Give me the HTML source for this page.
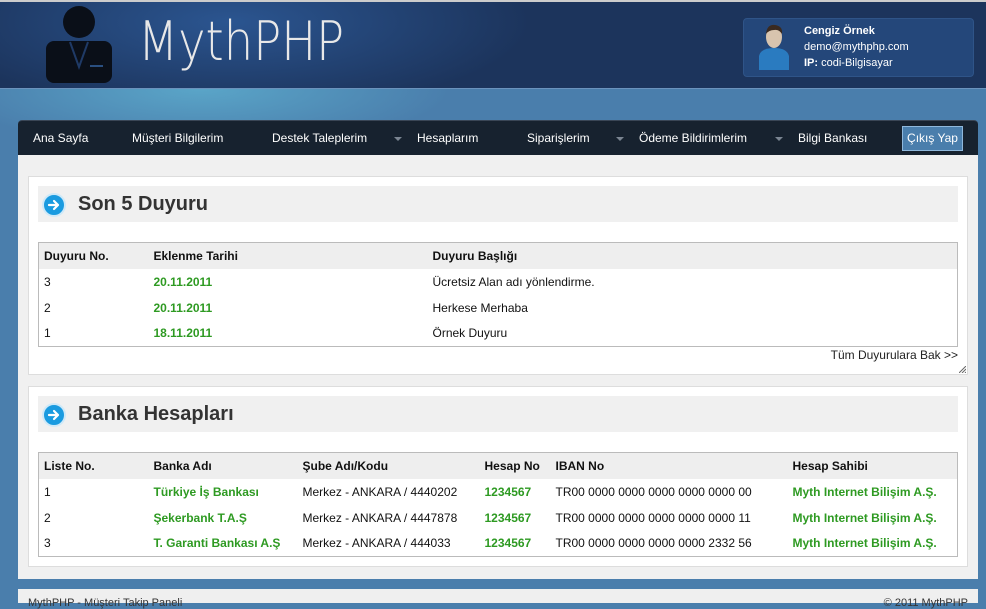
<!DOCTYPE html>
<html><head><meta charset="utf-8"><style>
*{margin:0;padding:0;box-sizing:border-box}
body{width:986px;height:603px;overflow:hidden;background:#4a7eac;font-family:"Liberation Sans",sans-serif;font-size:12px;color:#222;position:relative}
.top{position:absolute;left:0;top:0;width:986px;height:89px;background:radial-gradient(ellipse 300px 90px at 230px 20px,#2b5590,#1c345c);border-top:2px solid #ccc;border-bottom:1px solid #6b93bd}
.glow{position:absolute;left:0;top:89px;width:986px;height:80px;background:radial-gradient(ellipse 250px 60px at 200px 0,#5aa5c8,rgba(74,126,172,0))}
.logo{position:absolute;left:138px;top:8px;font-size:54px;color:#e8e8e8;font-family:"DejaVu Sans","Liberation Sans",sans-serif;font-weight:200;transform:scaleX(0.86);transform-origin:left}
.user{position:absolute;left:743px;top:16px;width:231px;height:59px;background:#24477a;border:1px solid #2f5488;border-radius:4px}
.user .t{position:absolute;left:60px;top:4px;color:#fff;font-size:11px;line-height:16px}
.nav{position:absolute;left:18px;top:120px;width:960px;height:35px;background:#17222f;border-radius:4px 4px 0 0;border-top:1px solid #3a4656}
.nav span{position:absolute;top:10px;color:#fff;font-size:12px}
.arr{position:absolute;top:16px;width:0;height:0;border-left:4px solid transparent;border-right:4px solid transparent;border-top:4px solid #7b8592}
.btn{position:absolute;left:884px;top:5px;width:61px;height:25px;background:#4a7eac;border:1px solid #8fb8dc;color:#fff;font-size:12px;text-align:center;line-height:23px}
.panel{position:absolute;left:18px;top:155px;width:960px;height:424px;background:#f0f0f0}
.box{position:absolute;left:10px;width:940px;background:#fff;border:1px solid #ddd}
.hd{position:absolute;left:9px;top:9px;width:920px;height:36px;background:#f0f0f0}
.hd b{position:absolute;left:40px;top:7px;font-size:20px;color:#333}
.ic{position:absolute;left:4px;top:7px}
table{position:absolute;left:9px;width:920px;border:1px solid #bbb;border-collapse:collapse}
th{background:#eee;text-align:left;font-weight:bold;height:26px;padding:0 5px;font-size:12px;color:#111}
td{height:26px;padding:0 5px;font-size:12px;color:#111}
.g{color:#2e9a22;font-weight:bold}
.footer{position:absolute;left:18px;top:589px;width:960px;height:14px;background:#efefef;font-size:11px;color:#333}
</style></head><body>
<div class="top">
<svg style="position:absolute;left:46px;top:3px" width="66" height="78" viewBox="0 0 66 78"><circle cx="33" cy="17" r="16" fill="#0a0f18"/><rect x="0" y="36" width="66" height="42" rx="8" fill="#0a0f18"/><path d="M24 37 L33 62 L42 37" fill="none" stroke="#1f3a66" stroke-width="2"/><rect x="44" y="60" width="13" height="2" fill="#2a4f80"/></svg>
<div class="logo">MythPHP</div>
<div class="user"><svg style="position:absolute;left:13px;top:5px" width="34" height="46" viewBox="0 0 34 46"><path d="M2 46 L2 32 Q4 24 17 24 Q30 24 32 32 L32 46Z" fill="#2a7bc0"/><ellipse cx="17" cy="13" rx="8" ry="11" fill="#d8c4ae"/><path d="M9 10 Q10 0 18 1 Q26 2 25 10 Q22 5 17 6 Q12 6 9 10Z" fill="#3a2a20"/></svg>
<div class="t"><b>Cengiz Örnek</b><br>demo@mythphp.com<br><b>IP:</b> codi-Bilgisayar</div></div>
</div>
<div class="glow"></div>
<div class="nav">
<span style="left:15px">Ana Sayfa</span>
<span style="left:114px">Müşteri Bilgilerim</span>
<span style="left:254px">Destek Taleplerim</span><i class="arr" style="left:376px"></i>
<span style="left:399px">Hesaplarım</span>
<span style="left:509px">Siparişlerim</span><i class="arr" style="left:598px"></i>
<span style="left:621px">Ödeme Bildirimlerim</span><i class="arr" style="left:757px"></i>
<span style="left:780px">Bilgi Bankası</span>
<div class="btn">Çıkış Yap</div>
</div>
<div class="panel">
<div class="box" style="top:21px;height:199px">
<div class="hd"><svg class="ic" width="24" height="24" viewBox="0 0 24 24"><circle cx="12" cy="12" r="11" fill="#1a9be0" stroke="#cfe9f8" stroke-width="2"/><path d="M7 12 H16 M12 8 L16 12 L12 16" fill="none" stroke="#fff" stroke-width="2.2" stroke-linecap="round" stroke-linejoin="round"/></svg><b>Son 5 Duyuru</b></div>
<table style="top:65px">
<tr><th style="width:110px">Duyuru No.</th><th style="width:279px">Eklenme Tarihi</th><th>Duyuru Başlığı</th></tr>
<tr><td>3</td><td class="g">20.11.2011</td><td>Ücretsiz Alan adı yönlendirme.</td></tr>
<tr><td>2</td><td class="g">20.11.2011</td><td>Herkese Merhaba</td></tr>
<tr><td>1</td><td class="g">18.11.2011</td><td>Örnek Duyuru</td></tr>
</table>
<div style="position:absolute;right:9px;top:171px;font-size:12px;color:#222">Tüm Duyurulara Bak &gt;&gt;</div>
<svg style="position:absolute;right:1px;bottom:1px" width="7" height="7"><path d="M0 7 L7 0 M3 7 L7 3 M6 7 L7 6" stroke="#666" stroke-width="1"/></svg>
</div>
<div class="box" style="top:231px;height:181px">
<div class="hd"><svg class="ic" width="24" height="24" viewBox="0 0 24 24"><circle cx="12" cy="12" r="11" fill="#1a9be0" stroke="#cfe9f8" stroke-width="2"/><path d="M7 12 H16 M12 8 L16 12 L12 16" fill="none" stroke="#fff" stroke-width="2.2" stroke-linecap="round" stroke-linejoin="round"/></svg><b>Banka Hesapları</b></div>
<table style="top:65px">
<tr><th style="width:110px">Liste No.</th><th style="width:149px">Banka Adı</th><th style="width:182px">Şube Adı/Kodu</th><th style="width:71px">Hesap No</th><th style="width:237px">IBAN No</th><th>Hesap Sahibi</th></tr>
<tr><td>1</td><td class="g">Türkiye İş Bankası</td><td>Merkez - ANKARA / 4440202</td><td class="g">1234567</td><td>TR00 0000 0000 0000 0000 0000 00</td><td class="g">Myth Internet Bilişim A.Ş.</td></tr>
<tr><td>2</td><td class="g">Şekerbank T.A.Ş</td><td>Merkez - ANKARA / 4447878</td><td class="g">1234567</td><td>TR00 0000 0000 0000 0000 0000 11</td><td class="g">Myth Internet Bilişim A.Ş.</td></tr>
<tr><td>3</td><td class="g">T. Garanti Bankası A.Ş</td><td>Merkez - ANKARA / 444033</td><td class="g">1234567</td><td>TR00 0000 0000 0000 0000 2332 56</td><td class="g">Myth Internet Bilişim A.Ş.</td></tr>
</table>
</div>
</div>
<div class="footer"><span style="position:absolute;left:10px;top:8px">MythPHP - Müşteri Takip Paneli</span><span style="position:absolute;right:10px;top:8px">© 2011 MythPHP</span></div>
</body></html>
